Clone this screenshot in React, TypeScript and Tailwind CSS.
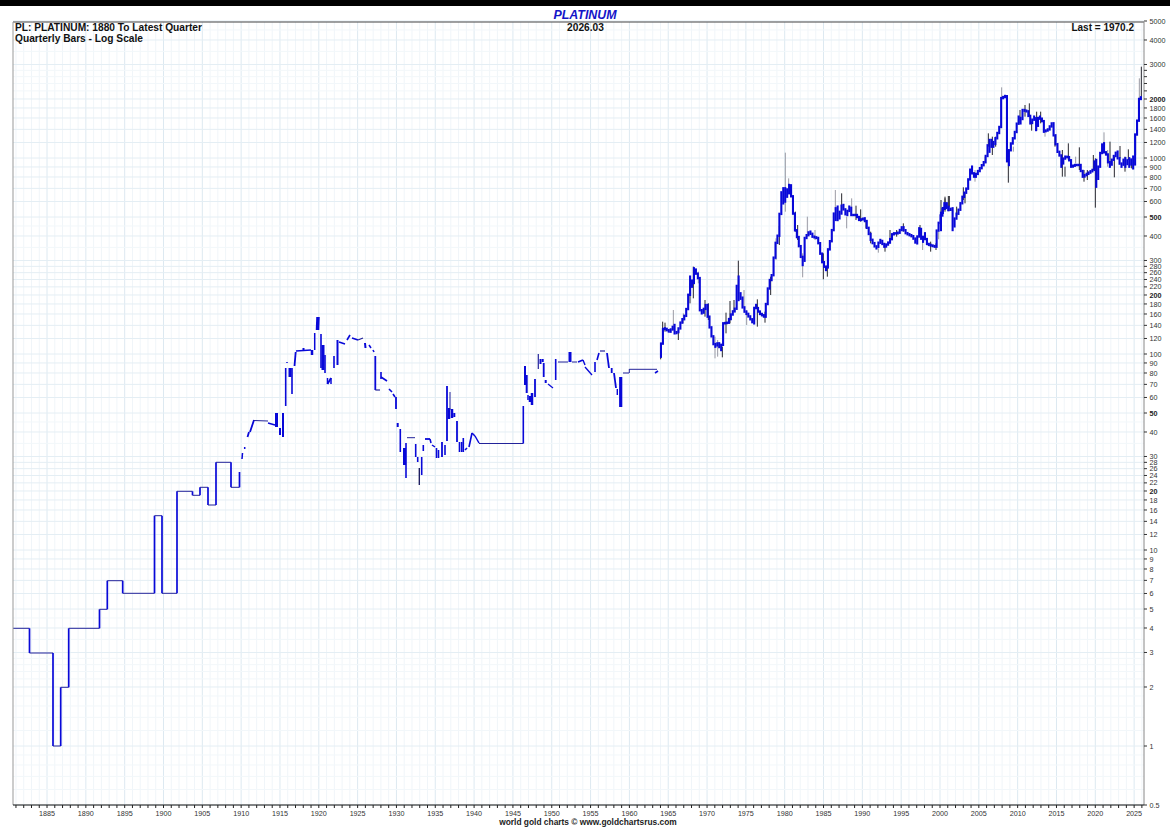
import React from "react";

const LEFT = 13;
const RIGHT = 1144;
const TOP = 6;
const BOTTOM = 789;
const BLUE = "#0808d8";

// the chart svg starts at page y 16, all data below is traced in page pixels
const OFFSET = 16;
const QUARTER = 7.765 / 4;

const yOf = (v: number) => 746 - 196 * Math.log10(v) - OFFSET;
const xOf = (year: number) => 163.5 + 7.765 * (year - 1900);

const priceLabels = [
  5000, 4000, 3000, 2000, 1800, 1600, 1400, 1200, 1000, 900, 800, 700, 600, 500, 400, 300, 280, 260, 240, 220, 200,
  180, 160, 140, 120, 100, 90, 80, 70, 60, 50, 40, 30, 28, 26, 24, 22, 20, 18, 16, 14, 12, 10, 9, 8, 7, 6, 5, 4, 3, 2,
  1, 0.5,
];
const extraLines = [4500, 3500, 2800, 2600, 2400, 2200, 450, 350, 45, 35, 4.5, 3.5, 2.8, 2.6, 2.4, 2.2, 1.8, 1.6, 1.4, 1.2, 0.9, 0.8, 0.7, 0.6];
const boldLabels = [2000, 500, 200, 50, 20];

const years: number[] = [];
for (let y = 1881; y <= 2026; y++) years.push(y);

// 1880 - 1910: step line, verticals heavy, horizontals thin
const steps: [number, number][] = [
  [13, 628.3], [29.5, 628.3], [29.5, 653], [53, 653], [53, 746], [60.7, 746], [60.7, 687.3], [68.7, 687.3], [68.7, 628.3],
  [99.5, 628.3], [99.5, 609.3], [107.3, 609.3], [107.3, 580.7], [122.7, 580.7], [122.7, 593.3], [154.5, 593.3],
  [154.5, 515.7], [162, 515.7], [162, 593.3], [177, 593.3], [177, 491.3], [192.5, 491.3], [192.5, 495.3], [200, 495.3],
  [200, 487.3], [208, 487.3], [208, 505], [216, 505], [216, 462.3], [231, 462.3], [231, 487.3], [239.5, 487.3], [239.5, 472],
];

// 1910 - 1964: separate quarterly strokes [x1, y1, x2, y2, width]
const strokes: [number, number, number, number, number][] = [
  [242.5, 453, 242, 459, 1.5], [244.7, 447, 244.7, 449, 1.5], [247.5, 437, 249, 432, 1.8], [250, 432, 254, 420, 1.8],
  [254, 420.5, 268, 421, 1], [268, 423, 275, 425, 1.5], [276.5, 413, 276.5, 427, 3], [280, 428, 280, 435, 2],
  [283, 413, 283, 437, 2], [285.7, 368, 285.7, 406, 1.6], [287, 362, 287, 363, 1.5], [290, 368, 290, 377, 3],
  [292, 368, 292, 394, 1.6], [294.5, 366, 295.7, 352, 1.8], [296, 351, 311, 350, 1.5], [303.5, 348, 303.5, 350, 2],
  [312, 350, 312, 355, 2.5], [314.7, 333, 314.7, 350, 1.5], [318, 317, 317.5, 330, 3.5], [321, 334, 321, 368, 1.6],
  [323, 345, 323, 370, 3], [325, 355, 325, 373, 1.6], [327.5, 384, 331, 378, 1.8], [327.5, 378, 327.5, 384, 1.5],
  [331, 378, 331, 384, 1.5], [334, 356, 334, 368, 1.6], [337.5, 340, 337.5, 365, 2], [339, 342, 345, 344, 1.5],
  [347, 340, 350, 335, 1.6], [352, 338, 358, 340, 1.5], [358, 340, 363, 338, 1.2], [365, 343, 365.5, 348, 2],
  [369, 345, 371, 348, 1.5], [373, 350, 374, 352, 1.5], [375.3, 356, 375.3, 390, 1.8], [375.3, 390, 380, 390, 1.2],
  [381, 372, 381, 379, 1.6], [381, 377, 387, 381, 1.6], [389, 389, 392, 392, 1.6], [393, 394, 395, 397, 1.6],
  [396, 397, 396, 409, 1.8], [397.7, 423, 397.7, 427, 2], [400.3, 429, 400.3, 452, 1.6], [404.5, 448, 404.5, 465, 3],
  [406, 443, 406, 478, 1.6], [407, 437.7, 415, 437.7, 1], [415.7, 444, 415.7, 457, 1.6], [417.7, 457, 417.7, 462, 1.6],
  [421.7, 457, 421.7, 475, 1.6], [423.3, 445, 423.3, 451, 1.6], [425, 439, 430, 439, 1.8], [430, 439, 431, 443, 1.5],
  [432, 445, 435, 447, 1.5], [436.5, 448, 436.5, 458, 1.6], [438.5, 450, 438.5, 458, 1.6], [442, 442, 442, 457, 1.8],
  [445, 445, 445, 455, 1.6], [447, 386, 447, 441, 1.8], [449, 408, 449, 419, 2.5], [450, 392, 450, 410, 1],
  [452, 409, 452, 418, 2.5], [454.3, 413, 454.3, 417, 2], [457, 421, 457, 442, 1.8], [459.5, 442, 459.5, 452, 1.6],
  [461.7, 442, 461.7, 452, 1.6], [463.3, 438, 463.3, 452, 1.6], [465, 450, 467, 448, 1.6], [469, 447, 472, 433, 1.6],
  [472, 433, 475, 436, 1.5], [475, 436, 479, 443, 1.5], [479, 443.5, 523.3, 443.5, 1], [523.3, 406, 523.3, 443.5, 1.6],
  [525, 366, 525, 385, 2], [526.7, 375, 526.7, 393, 2], [528, 395, 528, 400, 1.5], [530, 396, 530, 402, 2.5],
  [532, 393, 532, 405, 2.5], [535, 379, 535, 397, 1.8], [538.3, 354, 538.3, 369, 1.2], [540.5, 359, 540.5, 364, 2],
  [542.7, 359, 542.7, 362, 2], [543.7, 363, 543.7, 377, 1.8], [545.7, 380, 545.7, 383, 2], [548, 384, 553, 388, 1.3],
  [555.7, 359, 555.7, 380, 1.6], [558, 362, 568, 362, 1], [570, 352, 570, 362, 3], [572, 362, 577, 362, 1],
  [578, 362, 583, 360, 1.6], [583, 360, 585, 365, 1.4], [585, 367, 592, 375, 1.4], [595, 362, 595, 372, 1.6],
  [597, 360, 599, 353, 1.6], [600, 351, 605, 351, 1.2], [607, 353, 609, 368, 1.8], [611.7, 368, 611.7, 373, 1.8],
  [614, 373, 616, 388, 1.8], [617.3, 389, 617.3, 395, 1.4], [620.7, 377, 620.7, 407, 3.2], [623, 373, 629, 373, 1],
  [629.3, 369, 629.3, 373, 1], [629.3, 369.3, 657, 369.3, 1], [655, 373, 658, 371, 1.6],
];

// 1964 - 1990, traced from the crop at (650,140) scaled 3x
const line1: [number, number][] = [
  [30, 650], [30, 615], [37, 610], [37, 570], [45, 565], [60, 575], [75, 555], [75, 580], [85, 575], [95, 545], [105, 530],
  [115, 495], [120, 430], [120, 410], [128, 440], [133, 385], [145, 410], [152, 430], [152, 510], [157, 520], [170, 495],
  [178, 545], [185, 580], [195, 620], [205, 610], [215, 630], [222, 550], [235, 548], [247, 520], [258, 505], [265, 410],
  [268, 480], [272, 460], [282, 510], [295, 525], [312, 550], [316, 495], [330, 520], [345, 530], [352, 480], [358, 430],
  [368, 405], [372, 375], [376, 320], [385, 290], [393, 200], [398, 145], [402, 190], [408, 145], [412, 170], [420, 135],
  [428, 180], [436, 265], [446, 300], [455, 350], [460, 375], [466, 295], [480, 275], [490, 290], [505, 295], [512, 335],
  [520, 370], [530, 390], [537, 325], [546, 290], [556, 205], [560, 240], [564, 200], [568, 235], [578, 195], [590, 225],
  [600, 200], [605, 225], [620, 225], [630, 240], [645, 235], [655, 270], [665, 300], [680, 325], [692, 300], [705, 320],
  [720, 305], [730, 280], [745, 280], [758, 262], [770, 280], [790, 290], [800, 310], [810, 265], [818, 305], [825, 280],
  [830, 310], [840, 315], [857, 320], [862, 275], [872, 235], [885, 190], [895, 210],
];
const wicks1: [number, number, number, boolean?][] = [
  [32, 615, 658], [38, 545, 600], [45, 548, 575], [70, 510, 570, true], [85, 570, 600], [100, 520, 550, true], [120, 490, 430],
  [130, 380, 475], [145, 395, 430, true], [165, 480, 530], [175, 490, 540], [195, 590, 655, true], [203, 600, 650, true],
  [217, 620, 652], [228, 518, 580], [240, 483, 550], [252, 480, 515], [265, 362, 440], [282, 450, 500, true],
  [290, 510, 555, true], [322, 478, 560], [345, 515, 548], [362, 410, 465], [378, 295, 360, true], [388, 258, 315],
  [406, 38, 215, true], [416, 115, 145, true], [436, 215, 275], [443, 255, 300], [458, 340, 412, true], [472, 230, 290, true],
  [495, 270, 300, true], [520, 340, 418], [532, 375, 410], [556, 150, 210, true], [575, 160, 205], [590, 230, 265, true],
  [605, 175, 215, true], [618, 197, 240], [632, 208, 245], [648, 240, 265], [662, 275, 310], [685, 325, 338, true],
  [705, 320, 335], [720, 270, 305], [740, 270, 290], [760, 250, 275], [810, 255, 290], [818, 300, 330, true],
  [842, 305, 335], [858, 310, 330], [866, 275, 298, true], [885, 170, 215], [895, 168, 200],
];

// 1990 - 2026, traced from the crop at (930,60) scaled 3x
const line2: [number, number][] = [
  [30, 510], [30, 475], [37, 455], [48, 430], [58, 450], [68, 445], [68, 510], [78, 470], [88, 450], [100, 410], [112, 385],
  [118, 355], [125, 320], [130, 345], [135, 350], [150, 328], [165, 305], [172, 280], [178, 240], [178, 275], [186, 240],
  [190, 260], [197, 240], [208, 210], [215, 185], [215, 115], [228, 108], [230, 290], [237, 315], [240, 265], [255, 225],
  [262, 195], [268, 170], [272, 190], [280, 150], [295, 155], [303, 190], [315, 170], [318, 210], [328, 170], [340, 185],
  [340, 215], [355, 210], [368, 190], [375, 235], [385, 275], [393, 290], [393, 320], [405, 290], [418, 292], [425, 320],
  [437, 315], [450, 315], [460, 350], [475, 340], [490, 330], [497, 300], [497, 380], [505, 340], [512, 285], [520, 250],
  [522, 275], [530, 280], [540, 320], [550, 295], [562, 275], [564, 290], [575, 320], [585, 295], [585, 320], [598, 295],
  [598, 320], [610, 290], [610, 325], [618, 285], [618, 225], [625, 175], [630, 115], [635, 112],
];
const wicks2: [number, number, number, boolean?][] = [
  [33, 420, 470], [45, 415, 450], [58, 408, 440], [80, 440, 470], [100, 382, 420], [105, 400, 430], [135, 330, 365, true],
  [165, 290, 310, true], [175, 220, 260], [187, 230, 285], [197, 230, 260], [215, 82, 115, true], [235, 300, 368],
  [250, 260, 275, true], [270, 150, 190], [285, 135, 170], [298, 130, 170], [305, 185, 212], [320, 155, 212], [332, 155, 190],
  [345, 215, 230, true], [375, 225, 260], [397, 270, 350], [405, 320, 350], [415, 250, 300], [437, 290, 310, true],
  [448, 262, 330], [462, 330, 365], [472, 330, 360], [490, 285, 330], [496, 295, 443], [522, 217, 265, true],
  [533, 270, 320, true], [540, 245, 320], [553, 290, 352], [570, 258, 295], [585, 290, 335], [595, 268, 300],
  [605, 300, 325], [617, 225, 285, true], [628, 55, 115, true], [634, 20, 110],
];

// turn a traced outline into quarterly bars: each bar spans what the outline does in its quarter
const toBars = (ox: number, oy: number, pts: [number, number][]) => {
  const page = pts.map(([u, v]) => [ox + u / 3, oy + v / 3 - OFFSET]);
  const yAt = (x: number) => {
    for (let i = 1; i < page.length; i++) {
      const [x0, y0] = page[i - 1];
      const [x1, y1] = page[i];
      if (x >= x0 && x <= x1 && x1 > x0) return y0 + ((y1 - y0) * (x - x0)) / (x1 - x0);
    }
    return page[0][1];
  };
  const bars: { x: number; y1: number; y2: number }[] = [];
  const end = page[page.length - 1][0];
  for (let x = page[0][0]; x < end; x += QUARTER) {
    const ys = [yAt(x), yAt(Math.min(x + QUARTER, end))];
    page.forEach(([px, py]) => {
      if (px >= x && px <= x + QUARTER) ys.push(py);
    });
    bars.push({ x: x + QUARTER / 2, y1: Math.min(...ys) - 1.2, y2: Math.max(...ys) + 1.2 });
  }
  return bars;
};

const Bars = ({ ox, oy, pts }: { ox: number; oy: number; pts: [number, number][] }) => (
  <>
    {toBars(ox, oy, pts).map((b, i) => (
      <line key={i} x1={b.x} x2={b.x} y1={b.y1} y2={b.y2} stroke={BLUE} strokeWidth={2.1} />
    ))}
  </>
);

const Wicks = ({ ox, oy, data }: { ox: number; oy: number; data: [number, number, number, boolean?][] }) => (
  <>
    {data.map(([u, a, b, gray], i) => (
      <line
        key={i}
        x1={ox + u / 3}
        x2={ox + u / 3}
        y1={oy + a / 3 - OFFSET}
        y2={oy + b / 3 - OFFSET}
        stroke={gray ? "#9a9aa4" : "#26262e"}
        strokeWidth={1}
      />
    ))}
  </>
);

const Chart = () => (
  <svg width={1170} height={802} className="block">
    {/* grid */}
    {years.map((y) => (
      <line
        key={y}
        x1={xOf(y)}
        x2={xOf(y)}
        y1={TOP}
        y2={BOTTOM}
        stroke={y % 5 === 0 ? "#dde9f1" : "#f0f5f9"}
        strokeWidth={1}
      />
    ))}
    {[...priceLabels, ...extraLines].map((v) => (
      <line
        key={v}
        x1={LEFT}
        x2={RIGHT}
        y1={yOf(v)}
        y2={yOf(v)}
        stroke={extraLines.includes(v) ? "#f2f7fa" : "#e4eef4"}
        strokeWidth={1}
      />
    ))}

    {/* price */}
    {steps.slice(1).map(([x, y], i) => {
      const [px, py] = steps[i];
      return <line key={i} x1={px} y1={py - OFFSET} x2={x} y2={y - OFFSET} stroke={px === x ? BLUE : "#23239a"} strokeWidth={px === x ? 1.7 : 1} />;
    })}
    {strokes.map(([x1, y1, x2, y2, w], i) => (
      <line key={i} x1={x1} y1={y1 - OFFSET} x2={x2} y2={y2 - OFFSET} stroke={w <= 1.2 ? "#23239a" : BLUE} strokeWidth={w} />
    ))}
    <line x1={419.3} x2={419.3} y1={468 - OFFSET} y2={485 - OFFSET} stroke="#14145a" strokeWidth={1.3} />
    <Wicks ox={650} oy={140} data={wicks1} />
    <Wicks ox={930} oy={60} data={wicks2} />
    <Bars ox={650} oy={140} pts={line1} />
    <Bars ox={930} oy={60} pts={line2} />

    {/* frame */}
    <line x1={LEFT} x2={RIGHT} y1={TOP} y2={TOP} stroke="#444444" strokeWidth={1} />
    <line x1={LEFT} x2={LEFT} y1={TOP} y2={BOTTOM} stroke="#999999" strokeWidth={1} />
    <line x1={RIGHT} x2={RIGHT} y1={TOP} y2={BOTTOM} stroke="#888888" strokeWidth={1} />
    <line x1={LEFT} x2={RIGHT} y1={BOTTOM} y2={BOTTOM} stroke="#111111" strokeWidth={1} />

    {/* axes */}
    {years.map((y) => (
      <line key={y} x1={xOf(y)} x2={xOf(y)} y1={BOTTOM} y2={BOTTOM + 3} stroke="#222222" strokeWidth={1} />
    ))}
    {years
      .filter((y) => y % 5 === 0)
      .map((y) => (
        <text key={y} x={xOf(y)} y={BOTTOM + 10.5} textAnchor="middle" fontSize={7.2} fill="#333333" fontFamily="Liberation Sans, sans-serif">
          {y}
        </text>
      ))}
    {[...priceLabels, 2800, 2600, 2400, 2200].map((v) => (
      <line key={v} x1={RIGHT} x2={RIGHT + 3} y1={yOf(v)} y2={yOf(v)} stroke="#333333" strokeWidth={1} />
    ))}
    {priceLabels.map((v) => (
      <text
        key={v}
        x={RIGHT + 5.5}
        y={yOf(v) + 2.6}
        fontSize={7.2}
        fill={boldLabels.includes(v) ? "#222222" : "#333333"}
        fontWeight={boldLabels.includes(v) ? 700 : 400}
        fontFamily="Liberation Sans, sans-serif"
      >
        {v}
      </text>
    ))}
  </svg>
);

export default function App() {
  return (
    <div className="flex h-[828px] w-[1170px] flex-col overflow-hidden bg-white font-['Liberation_Sans',sans-serif]">
      <div className="h-[6px] bg-black" />
      <div className="h-[10px] text-center text-[12.4px] font-bold italic leading-[18px] text-[#1414c8]">PLATINUM</div>
      <div className="relative">
        <Chart />
        <div className="absolute left-[15px] top-[7px] text-[10.2px] font-bold leading-[10.5px] text-[#111111]">
          <div>PL: PLATINUM: 1880 To Latest Quarter</div>
          <div>Quarterly Bars - Log Scale</div>
        </div>
        <div className="absolute left-[1px] right-0 top-[7px] text-center text-[10.2px] font-bold leading-[10.5px] text-[#111111]">
          2026.03
        </div>
        <div className="absolute right-[36px] top-[7px] text-[10px] font-bold leading-[10.5px] text-[#111111]">
          Last = 1970.2
        </div>
      </div>
      <div className="pl-[6px] text-center text-[8.4px] font-bold leading-[8px] text-[#222222]">
        world gold charts © www.goldchartsrus.com
      </div>
    </div>
  );
}
